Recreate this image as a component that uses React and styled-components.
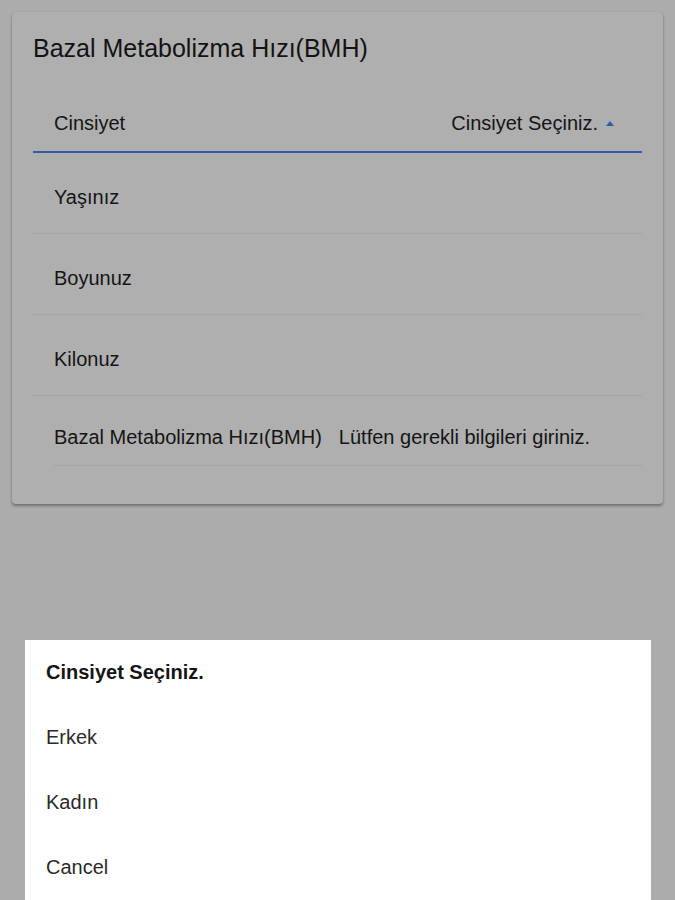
import React from "react";
import styled, { createGlobalStyle } from "styled-components";

const GlobalStyle = createGlobalStyle`
  html, body {
    margin: 0;
    padding: 0;
    background: #f6f6f6;
    font-family: "Liberation Sans", Arial, sans-serif;
  }
`;

const fields = ["Yaşınız", "Boyunuz", "Kilonuz"];
const options = ["Erkek", "Kadın", "Cancel"];

const Page = styled.div`
  padding: 12px 12px 0;
  min-height: 900px;
  box-sizing: border-box;
`;

const Card = styled.div`
  background: #fbfbfb;
  border-radius: 4px;
  padding: 21px 21px 38px;
  box-shadow: 0 2px 3px rgba(0, 0, 0, 0.35), 0 0 1px rgba(0, 0, 0, 0.15);
`;

const Title = styled.h1`
  margin: 0;
  font-size: 25px;
  line-height: 30px;
  font-weight: 400;
  color: #1c1c1c;
`;

const Row = styled.div`
  display: flex;
  align-items: center;
  justify-content: ${(p) => (p.$spread ? "space-between" : "flex-start")};
  gap: 17px;
  margin-left: ${(p) => (p.$inset ? "21px" : "0")};
  padding: ${(p) => p.$pad};
  font-size: 20px;
  line-height: 20px;
  color: #1f1f1f;
  border-bottom: ${(p) => (p.$active ? "2px solid #4a86ee" : "1px solid #ebebeb")};
`;

const Select = styled.span`
  display: flex;
  align-items: center;
  gap: 8px;
`;

const Arrow = styled.span`
  width: 0;
  height: 0;
  border-left: 4.5px solid transparent;
  border-right: 4.5px solid transparent;
  border-bottom: 5px solid #3f87f5;
  margin-right: 7px;
`;

const Backdrop = styled.div`
  position: fixed;
  inset: 0;
  background: rgba(0, 0, 0, 0.3);
`;

const Sheet = styled.div`
  position: fixed;
  left: 25px;
  right: 24px;
  bottom: 0;
  height: 260px;
  background: #ffffff;
  display: flex;
  flex-direction: column;
`;

const SheetItem = styled.div`
  height: 65px;
  display: flex;
  align-items: center;
  padding-left: 21px;
  font-size: 20px;
  font-weight: ${(p) => (p.$header ? 700 : 400)};
  color: ${(p) => (p.$header ? "#151515" : "#2a2a2a")};
`;

export default function App() {
  return (
    <>
      <GlobalStyle />
      <Page>
        <Card>
          <Title>Bazal Metabolizma Hızı(BMH)</Title>
          <Row $spread $active $pad="50px 21px 18px">
            <span>Cinsiyet</span>
            <Select>
              Cinsiyet Seçiniz.
              <Arrow />
            </Select>
          </Row>
          {fields.map((f) => (
            <Row key={f} $pad="34px 21px 26px">
              {f}
            </Row>
          ))}
          <Row $inset $pad="31px 0 18px">
            <span>Bazal Metabolizma Hızı(BMH)</span>
            <span>Lütfen gerekli bilgileri giriniz.</span>
          </Row>
        </Card>
      </Page>
      <Backdrop />
      <Sheet>
        <SheetItem $header>Cinsiyet Seçiniz.</SheetItem>
        {options.map((o) => (
          <SheetItem key={o}>{o}</SheetItem>
        ))}
      </Sheet>
    </>
  );
}
